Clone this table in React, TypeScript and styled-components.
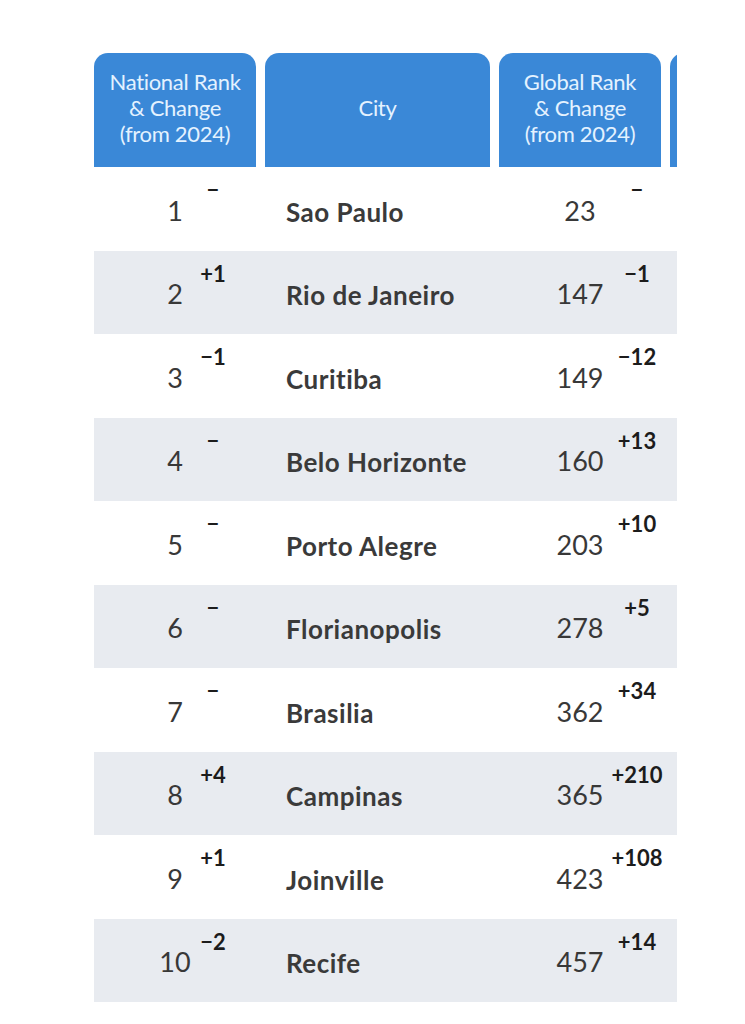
import styled, { createGlobalStyle } from "styled-components";

const rows = [
  { rank: 1, rankChange: "−", city: "Sao Paulo", global: 23, globalChange: "−" },
  { rank: 2, rankChange: "+1", city: "Rio de Janeiro", global: 147, globalChange: "−1" },
  { rank: 3, rankChange: "−1", city: "Curitiba", global: 149, globalChange: "−12" },
  { rank: 4, rankChange: "−", city: "Belo Horizonte", global: 160, globalChange: "+13" },
  { rank: 5, rankChange: "−", city: "Porto Alegre", global: 203, globalChange: "+10" },
  { rank: 6, rankChange: "−", city: "Florianopolis", global: 278, globalChange: "+5" },
  { rank: 7, rankChange: "−", city: "Brasilia", global: 362, globalChange: "+34" },
  { rank: 8, rankChange: "+4", city: "Campinas", global: 365, globalChange: "+210" },
  { rank: 9, rankChange: "+1", city: "Joinville", global: 423, globalChange: "+108" },
  { rank: 10, rankChange: "−2", city: "Recife", global: 457, globalChange: "+14" },
];

const GlobalStyle = createGlobalStyle`
  body {
    margin: 0;
    background: #ffffff;
    font-family: "Lato", "Open Sans", sans-serif;
  }
`;

const Page = styled.div`
  padding: 53px 0 0 94px;
`;

const Table = styled.div`
  width: 583px;
  overflow: hidden;
`;

const HeaderRow = styled.div`
  display: flex;
  gap: 9px;
  height: 114px;
`;

const HeaderCell = styled.div<{ $w: number }>`
  flex: 0 0 ${(p) => p.$w}px;
  box-sizing: border-box;
  padding-bottom: 4px;
  background: #3a88d7;
  border-radius: 14px 14px 0 0;
  color: #e4f2ff;
  font-size: 22px;
  line-height: 26px;
  text-align: center;
  display: flex;
  align-items: center;
  justify-content: center;
  letter-spacing: -0.3px;
`;

const Row = styled.div<{ $shade: boolean }>`
  display: flex;
  gap: 9px;
  height: 83.5px;
  width: 700px;
  background: ${(p) => (p.$shade ? "#e8ebf0" : "#ffffff")};
`;

const NumCell = styled.div<{ $w: number; $sup: number }>`
  flex: 0 0 ${(p) => p.$w}px;
  display: grid;
  grid-template-columns: ${(p) => p.$sup - 20}px 40px 1fr;
  grid-template-rows: 1fr;
`;

const Num = styled.div`
  grid-column: 1 / -1;
  grid-row: 1;
  justify-self: center;
  align-self: center;
  margin-top: 3px;
  font-size: 27px;
  color: #383838;
`;

const Sup = styled.div`
  grid-column: 2;
  grid-row: 1;
  justify-self: center;
  align-self: start;
  width: max-content;
  margin-top: 9px;
  font-size: 22px;
  font-weight: 700;
  color: #1c1c1c;
`;

const CityCell = styled.div`
  flex: 0 0 225px;
  box-sizing: border-box;
  padding: 6px 0 0 21px;
  display: flex;
  align-items: center;
  font-size: 26px;
  font-weight: 700;
  letter-spacing: 0.5px;
  color: #3a3a3a;
`;

const Spacer = styled.div`
  flex: 1;
`;

export default function App() {
  return (
    <Page>
      <GlobalStyle />
      <Table>
        <HeaderRow>
          <HeaderCell $w={162}>
            National Rank
            <br />
            &amp; Change
            <br />
            (from 2024)
          </HeaderCell>
          <HeaderCell $w={225}>City</HeaderCell>
          <HeaderCell $w={162}>
            Global Rank
            <br />
            &amp; Change
            <br />
            (from 2024)
          </HeaderCell>
          <HeaderCell $w={162} />
        </HeaderRow>
        {rows.map((r, i) => (
          <Row key={r.rank} $shade={i % 2 === 1}>
            <NumCell $w={162} $sup={119}>
              <Num>{r.rank}</Num>
              <Sup>{r.rankChange}</Sup>
            </NumCell>
            <CityCell>{r.city}</CityCell>
            <NumCell $w={162} $sup={138}>
              <Num>{r.global}</Num>
              <Sup>{r.globalChange}</Sup>
            </NumCell>
            <Spacer />
          </Row>
        ))}
      </Table>
    </Page>
  );
}
